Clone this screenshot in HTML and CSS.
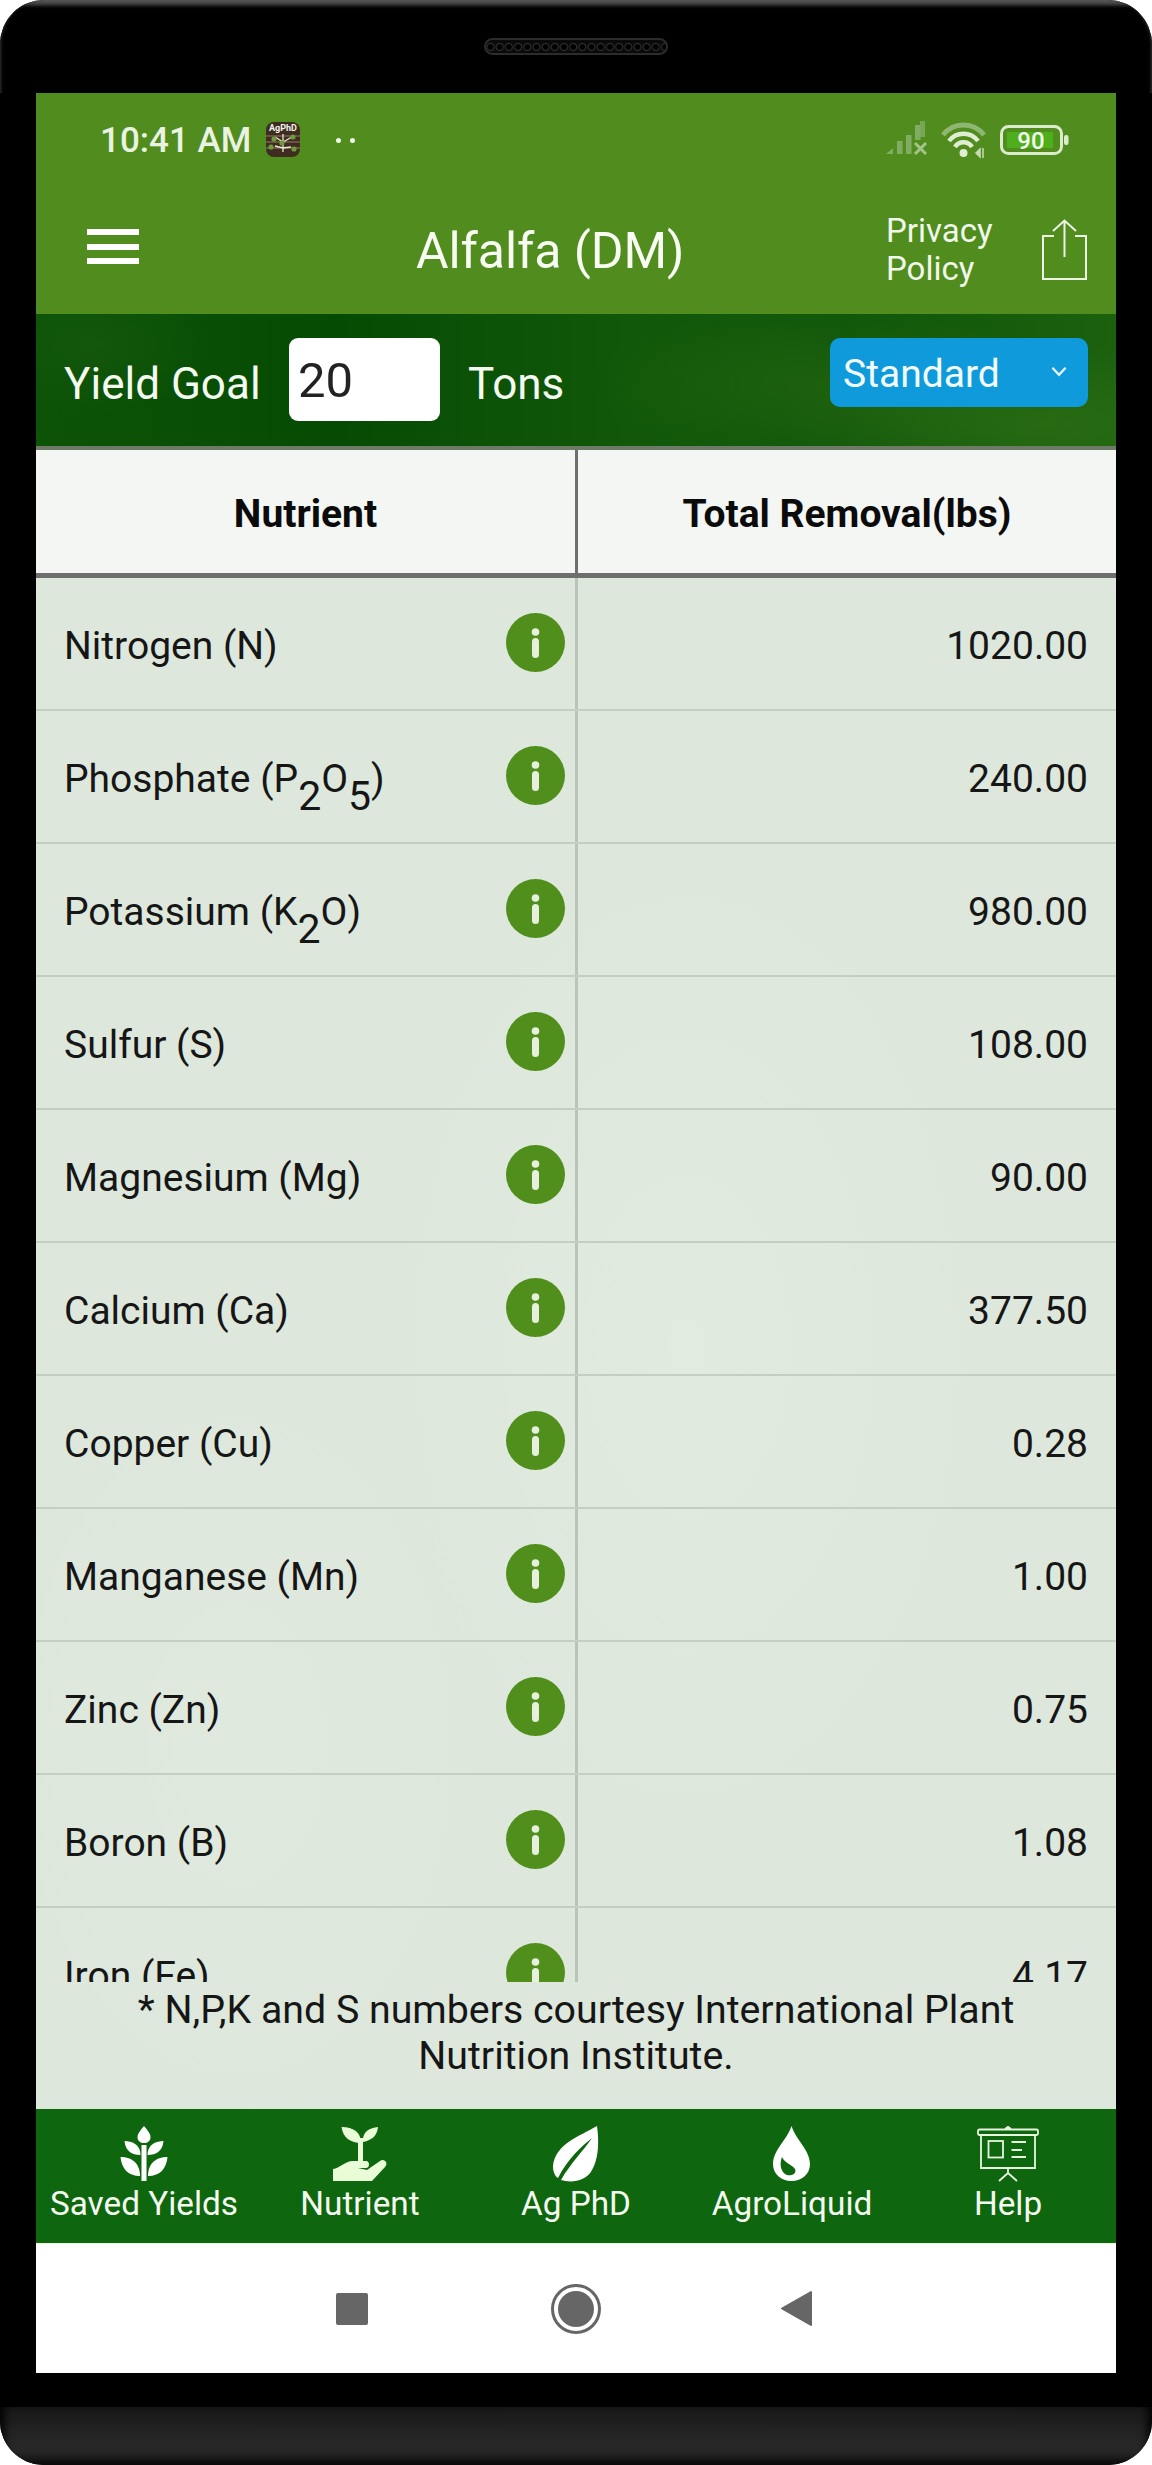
FILE: index.html
```html
<!DOCTYPE html>
<html lang="en">
<head>
<meta charset="utf-8">
<title>Alfalfa (DM)</title>
<link rel="stylesheet" href="styles.css">
</head>
<body>
<svg class="defs" width="0" height="0" aria-hidden="true">
  <symbol id="info" viewBox="0 0 59 59">
    <circle cx="29.5" cy="29.5" r="29.5" fill="#508f1b"/>
    <circle cx="29.5" cy="19" r="3.8" fill="#e6f0dc"/>
    <rect x="26" y="25" width="7" height="20" rx="3.5" fill="#e6f0dc"/>
  </symbol>
</svg>
<div class="phone">
  <div class="top-bezel"><div class="speaker"></div></div>
  <main class="screen">
    <div class="topbar">
      <div class="status">
        <span class="time">10:41 AM</span>
        <svg class="app-icon" width="34" height="35" viewBox="0 0 34 35">
          <rect width="34" height="35" rx="8" fill="#3f2c20"/>
          <path d="M0 14H34M0 20H34M0 26H34" stroke="#6c5240" stroke-width="2"/>
          <text x="17" y="9" text-anchor="middle" class="app-text">AgPhD</text>
          <path d="M17 12V30M17 20L9 15M17 20L26 15M17 26L9 24M17 26L25 25" stroke="#e8e8d8" stroke-width="1.3" fill="none"/>
          <circle cx="8" cy="17" r="2.6" fill="#6d9a3a"/><circle cx="27" cy="15" r="2.6" fill="#6d9a3a"/>
          <circle cx="5" cy="25" r="2.6" fill="#6d9a3a"/><circle cx="28" cy="27" r="2.6" fill="#6d9a3a"/>
          <circle cx="16" cy="21" r="2.6" fill="#6d9a3a"/>
        </svg>
        <span class="dots"><i></i><i></i></span>
        <svg class="sys-icons" width="186" height="40" viewBox="0 0 186 40">
          <g fill="#81ad62">
            <path d="M0 34L7 28V34Z"/>
            <rect x="11" y="21" width="5.500" height="13"/>
            <rect x="20" y="15" width="5.500" height="19"/>
            <rect x="29" y="5" width="5.500" height="15"/>
            <rect x="34" y="1" width="5" height="16" opacity=".8"/>
          </g>
          <path d="M29 23L40 34M40 23L29 34" stroke="#a4c48a" stroke-width="3"/>
          <path d="M57 15A26 26 0 0 1 98 15" fill="none" stroke="#8fb771" stroke-width="5"/>
          <path d="M63 21A18 18 0 0 1 92 21M69 27A10 10 0 0 1 86 27" fill="none" stroke="#e0edd2" stroke-width="4.500"/>
          <circle cx="77.500" cy="33" r="4" fill="#e0edd2"/>
          <path d="M90 33L94 29V37ZM97 28V38" stroke="#c7dcb4" stroke-width="1.500" fill="#c7dcb4"/>
          <rect x="115.500" y="6.500" width="60" height="27" rx="7" fill="none" stroke="#dcebcc" stroke-width="3"/>
          <rect x="121" y="12" width="46" height="16" fill="#4fae1c"/>
          <text x="145" y="28.500" text-anchor="middle" class="batt-text">90</text>
          <rect x="178" y="15" width="4.500" height="10" rx="2" fill="#dcebcc"/>
        </svg>
      </div>
      <header class="appbar">
        <div class="burger"><i></i><i></i><i></i></div>
        <h1 class="title">Alfalfa (DM)</h1>
        <div class="privacy">Privacy<br>Policy</div>
        <svg class="share" width="47" height="62" viewBox="0 0 47 62" fill="none" stroke="#eef5e6" stroke-width="2">
          <path d="M13 17H2V60H45V17H34"/>
          <path d="M23.500 38V2M12 12L23.500 1.500L35 12"/>
        </svg>
      </header>
    </div>

    <section class="goalbar">
      <span class="goal-label">Yield Goal</span>
      <span class="goal-input">20</span>
      <span class="goal-unit">Tons</span>
      <div class="select">
        <span>Standard</span>
        <svg class="chev" width="16" height="10" viewBox="0 0 16 10" fill="none" stroke="#eaf6fc" stroke-width="2"><path d="M2 1.500L8 8L14 1.500"/></svg>
      </div>
    </section>

    <section class="content">
      <div class="thead">
        <div class="th th-left">Nutrient</div>
        <div class="th">Total Removal(lbs)</div>
      </div>
      <div class="tbody">
        <div class="row"><div class="cell-name"><span>Nitrogen (N)</span><svg class="info"><use href="#info"/></svg></div><div class="cell-val">1020.00</div></div>
        <div class="row"><div class="cell-name"><span>Phosphate (P<b class="sub">2</b>O<b class="sub">5</b>)</span><svg class="info"><use href="#info"/></svg></div><div class="cell-val">240.00</div></div>
        <div class="row"><div class="cell-name"><span>Potassium (K<b class="sub">2</b>O)</span><svg class="info"><use href="#info"/></svg></div><div class="cell-val">980.00</div></div>
        <div class="row"><div class="cell-name"><span>Sulfur (S)</span><svg class="info"><use href="#info"/></svg></div><div class="cell-val">108.00</div></div>
        <div class="row"><div class="cell-name"><span>Magnesium (Mg)</span><svg class="info"><use href="#info"/></svg></div><div class="cell-val">90.00</div></div>
        <div class="row"><div class="cell-name"><span>Calcium (Ca)</span><svg class="info"><use href="#info"/></svg></div><div class="cell-val">377.50</div></div>
        <div class="row"><div class="cell-name"><span>Copper (Cu)</span><svg class="info"><use href="#info"/></svg></div><div class="cell-val">0.28</div></div>
        <div class="row"><div class="cell-name"><span>Manganese (Mn)</span><svg class="info"><use href="#info"/></svg></div><div class="cell-val">1.00</div></div>
        <div class="row"><div class="cell-name"><span>Zinc (Zn)</span><svg class="info"><use href="#info"/></svg></div><div class="cell-val">0.75</div></div>
        <div class="row"><div class="cell-name"><span>Boron (B)</span><svg class="info"><use href="#info"/></svg></div><div class="cell-val">1.08</div></div>
        <div class="row"><div class="cell-name"><span>Iron (Fe)</span><svg class="info"><use href="#info"/></svg></div><div class="cell-val">4.17</div></div>
      </div>
      <p class="note">* N,P,K and S numbers courtesy International Plant<br>Nutrition Institute.</p>
    </section>

    <nav class="tabs">
      <div class="tab">
        <svg class="tab-icon" width="56" height="56" viewBox="0 0 55 56" fill="#fff">
          <rect x="25" y="19" width="5" height="36"/>
          <path d="M27.500 0C31 4 34 8 34 11C34 15 31 17 27.500 17C24 17 21 15 21 11C21 8 24 4 27.500 0Z"/>
          <path d="M8 15C15 15 24 18 24 29C15 29 9 25 8 15Z"/>
          <path d="M47 15C40 15 31 18 31 29C40 29 46 25 47 15Z"/>
          <path d="M4 31C14 31 23.500 36 23.500 50C11 50 5 42 4 31Z"/>
          <path d="M51 31C41 31 31.500 36 31.500 50C44 50 50 42 51 31Z"/>
        </svg>
        <span>Saved Yields</span>
      </div>
      <div class="tab">
        <svg class="tab-icon" width="60" height="56" viewBox="0 0 60 56" fill="#eafbd8">
          <rect x="28" y="12" width="5" height="24"/>
          <path d="M11.500 1C20 1 31 4 31 17C21 17 13 12 11.500 1Z"/>
          <path d="M48 1C40 2 32 5 33 16C42 14 47 10 48 1Z"/>
          <path d="M3 43C10 42 14 36 22 35L36 35C40 35 40 42 36 42L28 42L37 44L50 35C54 32 59 37 55 41L42 55L3 55Z"/>
        </svg>
        <span>Nutrient</span>
      </div>
      <div class="tab">
        <svg class="tab-icon" width="52" height="56" viewBox="0 0 52 56" fill="#fff">
          <path d="M47 0C30 10 5 18 3 40C3 46 5 50 8 52C18 32 32 20 42 12C34 24 20 38 11 54C20 57 36 56 42 44C49 32 49 14 47 0Z"/>
        </svg>
        <span>Ag PhD</span>
      </div>
      <div class="tab">
        <svg class="tab-icon" width="44" height="56" viewBox="0 0 44 56">
          <path fill="#fff" d="M21.500 0C26 14 40 24 40 38C40 48 32 55 21.500 55C11 55 3 48 3 38C3 24 17 14 21.500 0Z"/>
          <path fill="#0e660f" d="M12 31C15 38 26 40 25.500 45C25 49 20 50 17 49C11 47 9 38 12 31Z"/>
        </svg>
        <span>AgroLiquid</span>
      </div>
      <div class="tab">
        <svg class="tab-icon" width="66" height="56" viewBox="0 0 66 56" fill="none" stroke="#e8f5df" stroke-width="1.800">
          <rect x="3" y="3.500" width="60" height="5.500" rx="1.500"/>
          <path d="M30 3L33 .8L36 3" fill="#e8f5df"/>
          <path d="M6 9V42H60V9"/>
          <rect x="13.500" y="15" width="14.500" height="16.500"/>
          <path d="M36.500 16H51M36.500 24H47M36.500 31H51" stroke-width="2.200"/>
          <path d="M33 42V47M24 55L33 47L42 55"/>
        </svg>
        <span>Help</span>
      </div>
    </nav>

    <div class="softkeys">
      <i class="key-square"></i>
      <svg class="key-home" width="50" height="50" viewBox="0 0 50 50">
        <circle cx="25" cy="25" r="23.500" fill="none" stroke="#666" stroke-width="3"/>
        <circle cx="25" cy="25" r="18" fill="#666"/>
      </svg>
      <svg class="key-back" width="33" height="37" viewBox="0 0 33 37">
        <path d="M31 2V35L2 18.500Z" fill="#666" stroke="#666" stroke-width="2" stroke-linejoin="round"/>
      </svg>
    </div>
  </main>
  <div class="lower-bezel"></div>
  <div class="chin"></div>
</div>
</body>
</html>
```

FILE: styles.css
```css
* { box-sizing: border-box; }
html, body { margin: 0; padding: 0; background: #fff; }
body { font-family: Roboto, "Liberation Sans", sans-serif; width: 1152px; height: 2465px; overflow: hidden; }
.defs { display: block; height: 0; }

.phone {
  width: 1152px;
  height: 2465px;
  background: #000;
  border-radius: 44px;
  overflow: hidden;
  display: flex;
  flex-direction: column;
}
.top-bezel {
  height: 93px;
  flex: none;
  padding-top: 38px;
  display: flex;
  justify-content: center;
  background: linear-gradient(#5e5e5e 0, #3a3a3a 4px, #0c0c0c 7px, #000 9px);
  box-shadow: inset 3px 0 3px -2px #333, inset -3px 0 3px -2px #333;
  border-radius: 44px 44px 0 0;
}
.speaker {
  width: 184px;
  height: 17px;
  border-radius: 9px;
  border: 2px solid #2c2c2c;
  background: radial-gradient(circle at 4.500px 7px, #000 2.500px, #333 3.500px, #0a0a0a 4.500px) 0 0 / 9.200px 13px repeat-x;
}

.screen {
  width: 1080px;
  height: 2280px;
  margin: 0 auto;
  flex: none;
  display: flex;
  flex-direction: column;
}

.topbar { background: #508c1e; height: 221px; flex: none; color: #fff; }
.status {
  height: 94px;
  display: flex;
  align-items: center;
  padding-left: 64px;
}
.time { font-size: 35px; font-weight: 500; color: #eaf3e2; width: 166px; white-space: nowrap; }
.app-icon { flex: none; margin-top: -1px; }
.app-text { font: 700 9px Roboto, sans-serif; fill: #f3f3ea; }
.dots { display: flex; gap: 9px; margin-left: 36px; }
.dots i { width: 5px; height: 5px; border-radius: 50%; background: #f1f6ea; }
.sys-icons { margin-left: auto; margin-right: 44px; flex: none; }
.batt-text { font: 500 24px Roboto, sans-serif; fill: #f4faef; }

.appbar {
  height: 127px;
  display: flex;
  align-items: center;
  padding-left: 51px;
}
.burger { width: 52px; display: flex; flex-direction: column; gap: 8.500px; margin-top: -8px; flex: none; }
.burger i { display: block; height: 6px; background: #fff; }
.title { margin: 0 171px 0 277px; font-size: 50px; font-weight: 400; width: 299px; flex: none; white-space: nowrap; color: #f7fbf2; letter-spacing: -.1px; }
.privacy { font-size: 33px; line-height: 38px; margin-top: -2px; width: 155px; flex: none; color: #f1f7ea; }
.share { flex: none; margin-top: -2px; }

.goalbar {
  height: 132px;
  flex: none;
  display: flex;
  align-items: flex-start;
  padding: 24px 28px 0;
  color: #f5faf0;
  background:
    radial-gradient(ellipse 220px 90px at 780px 70px, rgba(70,130,30,.25), transparent),
    radial-gradient(ellipse 260px 80px at 1000px 110px, rgba(70,130,30,.35), transparent),
    radial-gradient(ellipse 120px 70px at 60px 30px, rgba(50,110,30,.2), transparent),
    linear-gradient(90deg, #0c5307 0, #054b03 28%, #12580a 55%, #0e5509 75%, #1b610e 100%);
}
.goal-label { font-size: 44px; line-height: 50px; margin-top: 21px; width: 225px; flex: none; white-space: nowrap; }
.goal-input {
  width: 151px;
  height: 83px;
  flex: none;
  background: #fff;
  border-radius: 9px;
  color: #222;
  font-size: 49px;
  line-height: 85px;
  padding: 0 0 0 9px;
}
.goal-unit { font-size: 44px; line-height: 50px; margin: 21px 0 0 28px; }
.select {
  margin-left: auto;
  width: 258px;
  height: 69px;
  background: #0f9bdb;
  border-radius: 10px;
  display: flex;
  align-items: center;
  justify-content: space-between;
  padding: 2px 20px 0 13px;
  font-size: 39px;
  color: #f2fafd;
}
.chev { margin-top: -4px; width: 18px; height: 11px; }

.content {
  height: 1663px;
  flex: none;
  display: flex;
  flex-direction: column;
  background:
    radial-gradient(ellipse 300px 500px at 650px 900px, rgba(230,240,225,.4), transparent),
    radial-gradient(ellipse 260px 400px at 200px 1300px, rgba(230,238,228,.3), transparent),
    #dde7dc;
}
.thead {
  height: 132px;
  flex: none;
  display: grid;
  grid-template-columns: 542px 1fr;
  background: #f3f6f2;
  border-top: 4px solid #6d7a66;
  border-bottom: 5px solid #6e6e6e;
}
.th {
  display: flex;
  align-items: center;
  justify-content: center;
  padding-top: 5px;
  font-size: 39px;
  font-weight: 700;
  color: #0b0b0b;
}
.th-left { border-right: 3px solid #6e6e6e; }

.tbody {
  height: 1404px;
  flex: none;
  overflow: hidden;
}
.row {
  height: 133px;
  display: grid;
  grid-template-columns: 542px 1fr;
  border-bottom: 2px solid #c3cfc3;
  font-size: 39px;
  color: #161616;
}
.cell-name {
  border-right: 3px solid #b9c5b9;
  display: flex;
  align-items: center;
  justify-content: space-between;
  padding: 0 10px 0 28px;
}
.cell-name span { padding-top: 5px; }
.cell-val {
  display: flex;
  align-items: center;
  justify-content: flex-end;
  padding: 5px 28px 0 0;
}
.info { width: 59px; height: 59px; flex: none; margin-top: -2px; }
.sub { font-weight: 400; font-size: 41px; line-height: 0; vertical-align: -18px; }

.note {
  margin: 0;
  padding-top: 5px;
  font-size: 39.300px;
  line-height: 46px;
  text-align: center;
  color: #161616;
}

.tabs {
  height: 134px;
  flex: none;
  background: #0e660f;
  display: grid;
  grid-template-columns: repeat(5, 216px);
  color: #f4faef;
}
.tab {
  display: flex;
  flex-direction: column;
  align-items: center;
  padding-top: 17px;
}
.tab span { font-size: 33.300px; line-height: 38px; margin-top: 3px; white-space: nowrap; }
.tab-icon { display: block; flex: none; }

.softkeys {
  height: 130px;
  flex: none;
  background: #fff;
  display: flex;
  align-items: center;
  padding-left: 300px;
  border-top: 1px solid #e4f5dd;
}
.key-square { width: 32px; height: 32px; background: #666; border-radius: 2px; flex: none; }
.key-home { margin-left: 183px; flex: none; }
.key-back { margin-left: 179px; flex: none; }

.lower-bezel { height: 34px; flex: none; }
.chin {
  height: 58px;
  flex: none;
  background: linear-gradient(#181818 0, #272727 60%, #262626 78%, #0b0b0b 100%);
  box-shadow: inset 10px 0 10px -6px #000, inset -10px 0 10px -6px #000;
}
```
